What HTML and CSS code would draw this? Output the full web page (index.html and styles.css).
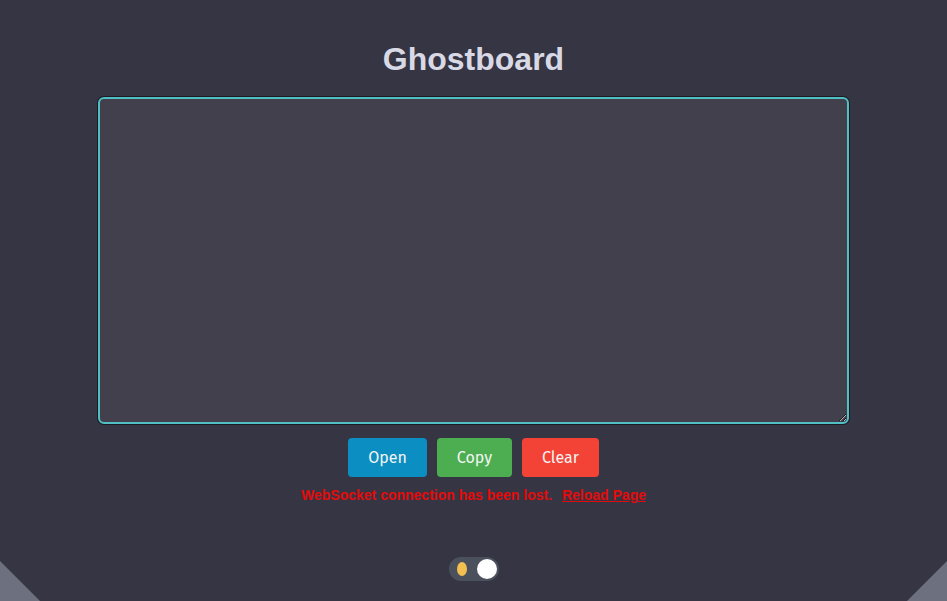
FILE: index.html
```html
<!DOCTYPE html>
<html lang="en">
<head>
<meta charset="utf-8">
<title>Ghostboard</title>
<link rel="stylesheet" href="styles.css">
</head>
<body>
<main class="page">
  <h1 class="title">Ghostboard</h1>
  <textarea class="board"></textarea>
  <div class="actions">
    <button class="btn btn-open">Open</button>
    <button class="btn btn-copy">Copy</button>
    <button class="btn btn-clear">Clear</button>
  </div>
  <p class="status">WebSocket connection has been lost. <a href="#" class="reload">Reload Page</a></p>
  <div class="toggle">
    <span class="moon"></span>
    <span class="knob"></span>
  </div>
</main>
<div class="corner corner-left"></div>
<div class="corner corner-right"></div>
</body>
</html>
```
FILE: styles.css
```css
html, body {
  margin: 0;
  padding: 0;
  height: 100%;
}
body {
  background: #363543;
  font-family: "Liberation Sans", Arial, sans-serif;
  overflow: hidden;
  position: relative;
}
.page {
  display: flex;
  flex-direction: column;
  align-items: center;
}
.title {
  margin: 41px 0 0;
  font-size: 32px;
  line-height: 36px;
  font-weight: bold;
  color: #d9d9e6;
}
.board {
  box-sizing: border-box;
  margin-top: 20px;
  width: 751px;
  height: 327px;
  background: #41404c;
  border: 2px solid #4fbfc4;
  box-shadow: 0 0 0 1px #1c1b24;
  border-radius: 6px;
  outline: none;
  resize: both;
  color: #ddd;
}
.actions {
  display: flex;
  gap: 10px;
  margin-top: 14px;
}
.btn {
  height: 39px;
  border: none;
  border-radius: 4px;
  color: #f4f4f4;
  font-family: "Fira Sans", "Noto Sans", sans-serif;
  font-size: 16px;
  padding: 0 19px;
  cursor: pointer;
}
.btn-open { background: #0b8ec1; width: 79px; }
.btn-copy { background: #4cae50; width: 75px; }
.btn-clear { background: #f34336; width: 77px; }
.status {
  margin: 10px 0 0;
  color: #e30b0b;
  font-weight: bold;
  font-size: 14px;
  line-height: 17px;
}
.reload {
  color: #e30b0b;
  text-decoration: underline;
  margin-left: 6px;
}
.toggle {
  margin-top: 53px;
  width: 50px;
  height: 24px;
  border-radius: 12px;
  background: #4b515c;
  display: flex;
  align-items: center;
  justify-content: space-between;
  padding: 0 2px 0 8px;
  box-sizing: border-box;
}
.moon {
  width: 10px;
  height: 14px;
  border-radius: 50%;
  background: #f1c050;
}
.knob {
  width: 20px;
  height: 20px;
  border-radius: 50%;
  background: #ffffff;
}
.corner {
  position: absolute;
  bottom: 0;
  width: 40px;
  height: 40px;
  background: #6d707e;
}
.corner-left {
  left: 0;
  clip-path: polygon(0 0, 100% 100%, 0 100%);
}
.corner-right {
  right: 0;
  clip-path: polygon(100% 0, 100% 100%, 0 100%);
}
```
